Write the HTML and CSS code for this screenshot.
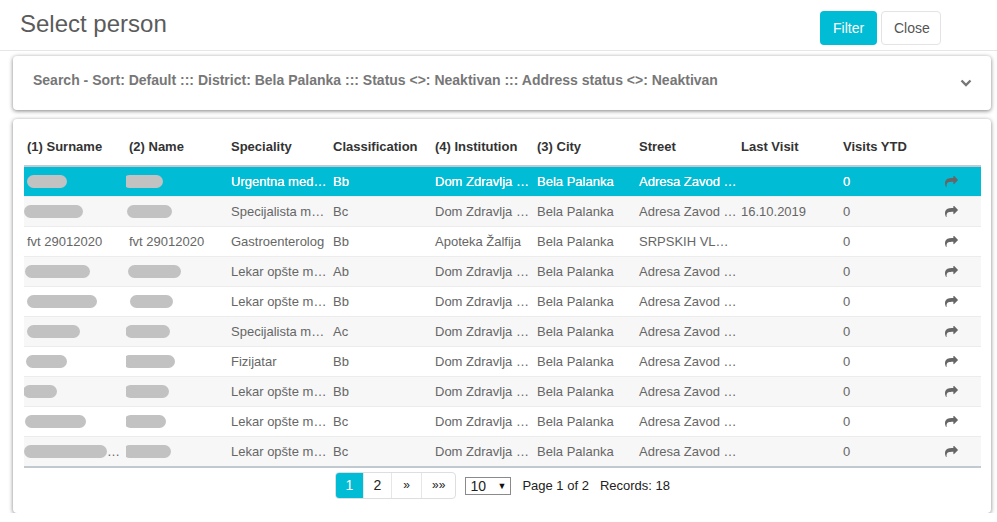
FILE: index.html
```html
<!DOCTYPE html>
<html lang="sr">
<head>
    <meta charset="UTF-8">
    <title>Select person</title>
    <link rel="stylesheet" href="styles.css">
</head>
<body>
    <div class="header">
        <h1 class="title">Select person</h1>
        <div class="actions">
            <button class="btn btn-primary">Filter</button>
            <button class="btn btn-default">Close</button>
        </div>
    </div>

    <div class="panel search">
        <span class="search-text">Search - Sort: Default ::: District: Bela Palanka ::: Status &lt;&gt;: Neaktivan ::: Address status &lt;&gt;: Neaktivan</span>
        <svg class="chevron" width="12" height="8" viewBox="0 0 12 8"><polyline points="1.5,1.5 6,6 10.5,1.5" fill="none" stroke="#777" stroke-width="2.4"/></svg>
    </div>

    <div class="panel results">
        <table class="grid">
            <colgroup>
                <col class="c"><col class="c"><col class="c"><col class="c"><col class="c">
                <col class="c"><col class="c"><col class="c"><col class="c"><col>
            </colgroup>
            <thead>
                <tr>
                    <th>(1) Surname</th><th>(2) Name</th><th>Speciality</th><th>Classification</th><th>(4) Institution</th>
                    <th>(3) City</th><th>Street</th><th>Last Visit</th><th>Visits YTD</th><th></th>
                </tr>
            </thead>
            <tbody>
                <tr class="selected">
                    <td><span class="blur" style="width:40px"></span></td>
                    <td><span class="blur" style="width:40px;margin-left:-6px"></span></td>
                    <td>Urgentna medicina</td><td>Bb</td><td>Dom Zdravlja Bela Palanka</td><td>Bela Palanka</td>
                    <td>Adresa Zavod za hitnu pomoć</td><td></td><td>0</td>
                    <td><svg class="go" viewBox="0 100 1792 1500"><path d="M1792 640q0 26-19 45l-512 512q-19 19-45 19t-45-19-19-45v-256h-224q-98 0-175.5 6t-154 21.5-133 42.5-105.5 69.5-80 101-48.5 138.5-17.5 181q0 55 5 123 0 6 2.5 23.5t2.5 26.5q0 15-8.5 25t-23.5 10q-16 0-28-17-7-9-13-22t-13.5-30-10.5-24q-127-285-127-451 0-199 53-333 162-403 875-403h224v-256q0-26 19-45t45-19 45 19l512 512q19 19 19 45z"/></svg></td>
                </tr>
                <tr>
                    <td><span class="blur" style="width:59px;margin-left:-3px"></span></td>
                    <td><span class="blur" style="width:45px;margin-left:-2px"></span></td>
                    <td>Specijalista medicine rada</td><td>Bc</td><td>Dom Zdravlja Bela Palanka</td><td>Bela Palanka</td>
                    <td>Adresa Zavod za zdravstvenu zaštitu</td><td>16.10.2019</td><td>0</td>
                    <td><svg class="go" viewBox="0 100 1792 1500"><path d="M1792 640q0 26-19 45l-512 512q-19 19-45 19t-45-19-19-45v-256h-224q-98 0-175.5 6t-154 21.5-133 42.5-105.5 69.5-80 101-48.5 138.5-17.5 181q0 55 5 123 0 6 2.5 23.5t2.5 26.5q0 15-8.5 25t-23.5 10q-16 0-28-17-7-9-13-22t-13.5-30-10.5-24q-127-285-127-451 0-199 53-333 162-403 875-403h224v-256q0-26 19-45t45-19 45 19l512 512q19 19 19 45z"/></svg></td>
                </tr>
                <tr>
                    <td>fvt 29012020</td><td>fvt 29012020</td>
                    <td>Gastroenterolog</td><td>Bb</td><td>Apoteka Žalfija</td><td>Bela Palanka</td>
                    <td>SRPSKIH VLADARA 12</td><td></td><td>0</td>
                    <td><svg class="go" viewBox="0 100 1792 1500"><path d="M1792 640q0 26-19 45l-512 512q-19 19-45 19t-45-19-19-45v-256h-224q-98 0-175.5 6t-154 21.5-133 42.5-105.5 69.5-80 101-48.5 138.5-17.5 181q0 55 5 123 0 6 2.5 23.5t2.5 26.5q0 15-8.5 25t-23.5 10q-16 0-28-17-7-9-13-22t-13.5-30-10.5-24q-127-285-127-451 0-199 53-333 162-403 875-403h224v-256q0-26 19-45t45-19 45 19l512 512q19 19 19 45z"/></svg></td>
                </tr>
                <tr>
                    <td><span class="blur" style="width:65px;margin-left:-2px"></span></td>
                    <td><span class="blur" style="width:53px;margin-left:-1px"></span></td>
                    <td>Lekar opšte medicine</td><td>Ab</td><td>Dom Zdravlja Bela Palanka</td><td>Bela Palanka</td>
                    <td>Adresa Zavod za zdravstvenu zaštitu</td><td></td><td>0</td>
                    <td><svg class="go" viewBox="0 100 1792 1500"><path d="M1792 640q0 26-19 45l-512 512q-19 19-45 19t-45-19-19-45v-256h-224q-98 0-175.5 6t-154 21.5-133 42.5-105.5 69.5-80 101-48.5 138.5-17.5 181q0 55 5 123 0 6 2.5 23.5t2.5 26.5q0 15-8.5 25t-23.5 10q-16 0-28-17-7-9-13-22t-13.5-30-10.5-24q-127-285-127-451 0-199 53-333 162-403 875-403h224v-256q0-26 19-45t45-19 45 19l512 512q19 19 19 45z"/></svg></td>
                </tr>
                <tr>
                    <td><span class="blur" style="width:70px"></span></td>
                    <td><span class="blur" style="width:43px;margin-left:1px"></span></td>
                    <td>Lekar opšte medicine</td><td>Bb</td><td>Dom Zdravlja Bela Palanka</td><td>Bela Palanka</td>
                    <td>Adresa Zavod za zdravstvenu zaštitu</td><td></td><td>0</td>
                    <td><svg class="go" viewBox="0 100 1792 1500"><path d="M1792 640q0 26-19 45l-512 512q-19 19-45 19t-45-19-19-45v-256h-224q-98 0-175.5 6t-154 21.5-133 42.5-105.5 69.5-80 101-48.5 138.5-17.5 181q0 55 5 123 0 6 2.5 23.5t2.5 26.5q0 15-8.5 25t-23.5 10q-16 0-28-17-7-9-13-22t-13.5-30-10.5-24q-127-285-127-451 0-199 53-333 162-403 875-403h224v-256q0-26 19-45t45-19 45 19l512 512q19 19 19 45z"/></svg></td>
                </tr>
                <tr>
                    <td><span class="blur" style="width:53px"></span></td>
                    <td><span class="blur" style="width:45px;margin-left:-4px"></span></td>
                    <td>Specijalista medicine rada</td><td>Ac</td><td>Dom Zdravlja Bela Palanka</td><td>Bela Palanka</td>
                    <td>Adresa Zavod za zdravstvenu zaštitu</td><td></td><td>0</td>
                    <td><svg class="go" viewBox="0 100 1792 1500"><path d="M1792 640q0 26-19 45l-512 512q-19 19-45 19t-45-19-19-45v-256h-224q-98 0-175.5 6t-154 21.5-133 42.5-105.5 69.5-80 101-48.5 138.5-17.5 181q0 55 5 123 0 6 2.5 23.5t2.5 26.5q0 15-8.5 25t-23.5 10q-16 0-28-17-7-9-13-22t-13.5-30-10.5-24q-127-285-127-451 0-199 53-333 162-403 875-403h224v-256q0-26 19-45t45-19 45 19l512 512q19 19 19 45z"/></svg></td>
                </tr>
                <tr>
                    <td><span class="blur" style="width:41px;margin-left:-1px"></span></td>
                    <td><span class="blur" style="width:52px;margin-left:-6px"></span></td>
                    <td>Fizijatar</td><td>Bb</td><td>Dom Zdravlja Bela Palanka</td><td>Bela Palanka</td>
                    <td>Adresa Zavod za zdravstvenu zaštitu</td><td></td><td>0</td>
                    <td><svg class="go" viewBox="0 100 1792 1500"><path d="M1792 640q0 26-19 45l-512 512q-19 19-45 19t-45-19-19-45v-256h-224q-98 0-175.5 6t-154 21.5-133 42.5-105.5 69.5-80 101-48.5 138.5-17.5 181q0 55 5 123 0 6 2.5 23.5t2.5 26.5q0 15-8.5 25t-23.5 10q-16 0-28-17-7-9-13-22t-13.5-30-10.5-24q-127-285-127-451 0-199 53-333 162-403 875-403h224v-256q0-26 19-45t45-19 45 19l512 512q19 19 19 45z"/></svg></td>
                </tr>
                <tr>
                    <td><span class="blur" style="width:34px;margin-left:-4px"></span></td>
                    <td><span class="blur" style="width:45px;margin-left:-5px"></span></td>
                    <td>Lekar opšte medicine</td><td>Bb</td><td>Dom Zdravlja Bela Palanka</td><td>Bela Palanka</td>
                    <td>Adresa Zavod za zdravstvenu zaštitu</td><td></td><td>0</td>
                    <td><svg class="go" viewBox="0 100 1792 1500"><path d="M1792 640q0 26-19 45l-512 512q-19 19-45 19t-45-19-19-45v-256h-224q-98 0-175.5 6t-154 21.5-133 42.5-105.5 69.5-80 101-48.5 138.5-17.5 181q0 55 5 123 0 6 2.5 23.5t2.5 26.5q0 15-8.5 25t-23.5 10q-16 0-28-17-7-9-13-22t-13.5-30-10.5-24q-127-285-127-451 0-199 53-333 162-403 875-403h224v-256q0-26 19-45t45-19 45 19l512 512q19 19 19 45z"/></svg></td>
                </tr>
                <tr>
                    <td><span class="blur" style="width:61px;margin-left:-2px"></span></td>
                    <td><span class="blur" style="width:42px;margin-left:-5px"></span></td>
                    <td>Lekar opšte medicine</td><td>Bc</td><td>Dom Zdravlja Bela Palanka</td><td>Bela Palanka</td>
                    <td>Adresa Zavod za zdravstvenu zaštitu</td><td></td><td>0</td>
                    <td><svg class="go" viewBox="0 100 1792 1500"><path d="M1792 640q0 26-19 45l-512 512q-19 19-45 19t-45-19-19-45v-256h-224q-98 0-175.5 6t-154 21.5-133 42.5-105.5 69.5-80 101-48.5 138.5-17.5 181q0 55 5 123 0 6 2.5 23.5t2.5 26.5q0 15-8.5 25t-23.5 10q-16 0-28-17-7-9-13-22t-13.5-30-10.5-24q-127-285-127-451 0-199 53-333 162-403 875-403h224v-256q0-26 19-45t45-19 45 19l512 512q19 19 19 45z"/></svg></td>
                </tr>
                <tr>
                    <td><span class="blur" style="width:83px;margin-left:-3px"></span>…</td>
                    <td><span class="blur" style="width:48px;margin-left:-6px"></span></td>
                    <td>Lekar opšte medicine</td><td>Bc</td><td>Dom Zdravlja Bela Palanka</td><td>Bela Palanka</td>
                    <td>Adresa Zavod za zdravstvenu zaštitu</td><td></td><td>0</td>
                    <td><svg class="go" viewBox="0 100 1792 1500"><path d="M1792 640q0 26-19 45l-512 512q-19 19-45 19t-45-19-19-45v-256h-224q-98 0-175.5 6t-154 21.5-133 42.5-105.5 69.5-80 101-48.5 138.5-17.5 181q0 55 5 123 0 6 2.5 23.5t2.5 26.5q0 15-8.5 25t-23.5 10q-16 0-28-17-7-9-13-22t-13.5-30-10.5-24q-127-285-127-451 0-199 53-333 162-403 875-403h224v-256q0-26 19-45t45-19 45 19l512 512q19 19 19 45z"/></svg></td>
                </tr>
            </tbody>
        </table>

        <div class="pager">
            <ul class="pages">
                <li class="active">1</li>
                <li>2</li>
                <li class="arrow">»</li>
                <li class="arrow">»»</li>
            </ul>
            <div class="page-size"><span>10</span><span class="caret">▼</span></div>
            <span class="info">Page 1 of 2</span>
            <span class="info">Records: 18</span>
        </div>
    </div>
</body>
</html>
```

FILE: styles.css
```css
body {
    margin: 0;
    background: #fff;
    font-family: "Liberation Sans", Arial, sans-serif;
    color: #666;
}
.header {
    display: flex;
    justify-content: space-between;
    align-items: flex-start;
    height: 50px;
    border-bottom: 1px solid #e6e6e6;
    padding: 0 56px 0 20px;
}
.title {
    margin: 0;
    padding-top: 10px;
    font-size: 24px;
    line-height: 28px;
    font-weight: normal;
    color: #5b5b5b;
}
.actions {
    display: flex;
    gap: 4px;
    margin-top: 11px;
}
.btn {
    height: 34px;
    padding: 0 12px;
    font-family: inherit;
    font-size: 14px;
    border-radius: 4px;
    border: 1px solid transparent;
    cursor: pointer;
}
.btn-primary {
    background: #00bcd4;
    color: #fff;
    width: 57px;
}
.btn-default {
    background: #fff;
    border-color: #e3e3e3;
    color: #555;
    width: 60px;
}
.panel {
    background: #fff;
    border-radius: 4px;
    box-shadow: 0 1px 4px rgba(0, 0, 0, 0.5);
    margin: 0 6px 0 13px;
}
.search {
    margin-top: 5px;
    height: 54px;
    box-sizing: border-box;
    padding: 16px 19px 0 20px;
    display: flex;
    justify-content: space-between;
    align-items: flex-start;
}
.search-text {
    font-size: 14px;
    line-height: 16px;
    font-weight: bold;
    color: #777;
}
.chevron {
    margin-top: 7px;
}
.results {
    margin-top: 9px;
    padding: 11px 10px 14px 11px;
}
.grid {
    width: 100%;
    table-layout: fixed;
    border-collapse: collapse;
    font-size: 13px;
    line-height: 18px;
    border-bottom: 2px solid #c2cad1;
}
.grid col.c {
    width: 102px;
}
.grid th {
    text-align: left;
    color: #333;
    font-weight: bold;
    padding: 8px 3px 9px;
    border-bottom: 2px solid #c2cad1;
    white-space: nowrap;
}
.grid td {
    height: 18px;
    padding: 6px 1px 5px 3px;
    border-bottom: 1px solid #ececec;
    white-space: nowrap;
    overflow: hidden;
    text-overflow: ellipsis;
    color: #666;
}
.grid tbody tr:nth-child(even) {
    background: #f7f7f7;
}
.grid tbody tr.selected {
    background: #00bcd4;
}
.grid tbody tr.selected td {
    color: #fff;
    text-shadow: 0 0 0.4px #fff;
}
.blur {
    display: inline-block;
    height: 13px;
    border-radius: 7px;
    background: #c2c2c2;
    vertical-align: -2px;
}
.go {
    width: 13px;
    height: 11px;
    fill: #666;
    vertical-align: -1px;
}
.pager {
    display: flex;
    justify-content: center;
    align-items: center;
    margin-top: 4px;
    font-size: 14px;
    color: #222;
}
.pages {
    display: flex;
    list-style: none;
    margin: 0;
    padding: 0;
    border: 1px solid #dedede;
    border-radius: 4px;
    overflow: hidden;
}
.pages li {
    height: 25px;
    line-height: 25px;
    padding: 0 9px;
    border-left: 1px solid #e6e6e6;
    color: #222;
    min-width: 9px;
    text-align: center;
}
.pages li:first-child {
    border-left: none;
}
.pages li.active {
    background: #00bcd4;
    color: #fff;
}
.pages li.arrow {
    font-size: 12px;
    padding: 0 10px;
}
.page-size {
    display: flex;
    justify-content: space-between;
    align-items: center;
    box-sizing: border-box;
    width: 46px;
    height: 18px;
    margin: 0 11px 0 9px;
    padding: 0 4px;
    border: 1px solid #8a8a8a;
    font-size: 14px;
}
.caret {
    font-size: 9px;
    color: #111;
}
.info {
    font-size: 13px;
    margin-right: 11px;
}
.info:last-child {
    margin-right: 0;
}
```
